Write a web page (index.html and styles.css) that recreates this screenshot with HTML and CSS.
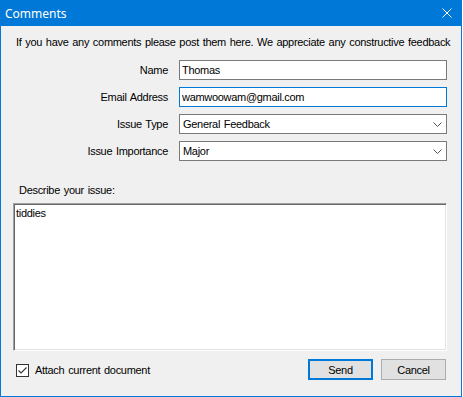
FILE: index.html
```html
<!DOCTYPE html>
<html>

<head>
  <meta charset="UTF-8">
  <title>Comments</title>
  <link rel="stylesheet" href="styles.css">
</head>

<body>
  <div class="window">
    <div class="titlebar">
      <span class="title">Comments</span>
      <svg class="close" width="10" height="10" viewBox="0 0 10 10">
        <path d="M0.5 0.5 L9.5 9.5 M9.5 0.5 L0.5 9.5" stroke="#fff" stroke-width="1" fill="none" />
      </svg>
    </div>

    <div class="panel">
      <div class="intro">If you have any comments please post them here. We appreciate any constructive feedback</div>

      <div class="form">
        <label class="label">Name</label>
        <input class="field" type="text" value="Thomas">

        <label class="label">Email Address</label>
        <input class="field focused" type="text" value="wamwoowam@gmail.com">

        <label class="label">Issue Type</label>
        <div class="combo">
          <span>General Feedback</span>
          <svg width="9" height="5" viewBox="0 0 9 5">
            <path d="M0.5 0.5 L4.5 4.5 L8.5 0.5" stroke="#555" fill="none" />
          </svg>
        </div>

        <label class="label">Issue Importance</label>
        <div class="combo">
          <span>Major</span>
          <svg width="9" height="5" viewBox="0 0 9 5">
            <path d="M0.5 0.5 L4.5 4.5 L8.5 0.5" stroke="#555" fill="none" />
          </svg>
        </div>
      </div>

      <div class="describe">Describe your issue:</div>
      <textarea class="issue">tiddies</textarea>

      <div class="footer">
        <div class="attach">
          <div class="checkbox">
            <svg width="11" height="11" viewBox="0 0 11 11">
              <path d="M1.5 5.5 L4 8 L9.5 2.5" stroke="#333" stroke-width="1.1" fill="none" />
            </svg>
          </div>
          <span>Attach current document</span>
        </div>
        <div class="buttons">
          <button class="button default">Send</button>
          <button class="button">Cancel</button>
        </div>
      </div>
    </div>
  </div>
</body>

</html>
```

FILE: styles.css
```css
* {
  margin: 0px;
  padding: 0px;
  box-sizing: border-box;
}

body {
  font-family: "Liberation Sans", Arial, sans-serif;
  font-size: 11px;
  line-height: 13px;
  letter-spacing: -0.3px;
  word-spacing: 1px;
  color: #000;
  background-color: #fff;
}

.window {
  width: 462px;
  height: 397px;
  border: 1px solid #0078D7;
  border-top: 0;
  background-color: #F0F0F0;
  display: flex;
  flex-direction: column;
}

.titlebar {
  height: 26px;
  background-color: #0078D7;
  display: flex;
  justify-content: space-between;
  align-items: center;
  padding: 0 9px 0 4px;
}

.title {
  font-family: "Noto Sans", sans-serif;
  font-size: 12px;
  letter-spacing: 0;
  word-spacing: 0;
  color: white;
}

.panel {
  flex: 1;
  display: flex;
  flex-direction: column;
  padding: 10px 14px 0 12px;
}

.intro {
  margin-left: 3px;
  white-space: nowrap;
}

.form {
  margin-top: 11px;
  display: grid;
  grid-template-columns: 155px 268px;
  column-gap: 11px;
  row-gap: 7px;
  align-items: center;
}

.label {
  text-align: right;
}

.field {
  height: 20px;
  border: 1px solid #7A7A7A;
  background: white;
  padding: 0 2px;
  font-family: inherit;
  font-size: 11px;
  letter-spacing: inherit;
  word-spacing: inherit;
  color: #000;
  outline: none;
}

.field.focused {
  border-color: #0078D7;
}

.combo {
  height: 20px;
  border: 1px solid #7A7A7A;
  background: white;
  display: flex;
  justify-content: space-between;
  align-items: center;
  padding: 0 4px 0 3px;
}

.describe {
  margin-top: 23px;
  margin-left: 6px;
}

.issue {
  margin-top: 6px;
  height: 148px;
  width: 434px;
  resize: none;
  border: 1px solid;
  border-color: #A0A0A0 #FFFFFF #FFFFFF #A0A0A0;
  box-shadow: inset 1px 1px #696969, inset -1px -1px #E3E3E3;
  padding: 3px 2px;
  font-family: inherit;
  font-size: 11px;
  line-height: 13px;
  letter-spacing: inherit;
  color: #000;
  background: white;
  outline: none;
  overflow: hidden;
}

.footer {
  margin-top: 8px;
  display: flex;
  justify-content: space-between;
  align-items: center;
}

.attach {
  display: flex;
  align-items: center;
  gap: 6px;
  margin-left: 3px;
  margin-top: 1px;
}

.checkbox {
  width: 13px;
  height: 13px;
  border: 1px solid #333;
  background: white;
  display: grid;
  place-items: center;
}

.buttons {
  display: flex;
  gap: 8px;
  margin-right: 1px;
}

.button {
  width: 65px;
  height: 21px;
  border: 1px solid #ADADAD;
  background-color: #E1E1E1;
  font-family: inherit;
  font-size: 11px;
  letter-spacing: inherit;
  color: #000;
}

.button.default {
  border: 2px solid #0078D7;
}
```
